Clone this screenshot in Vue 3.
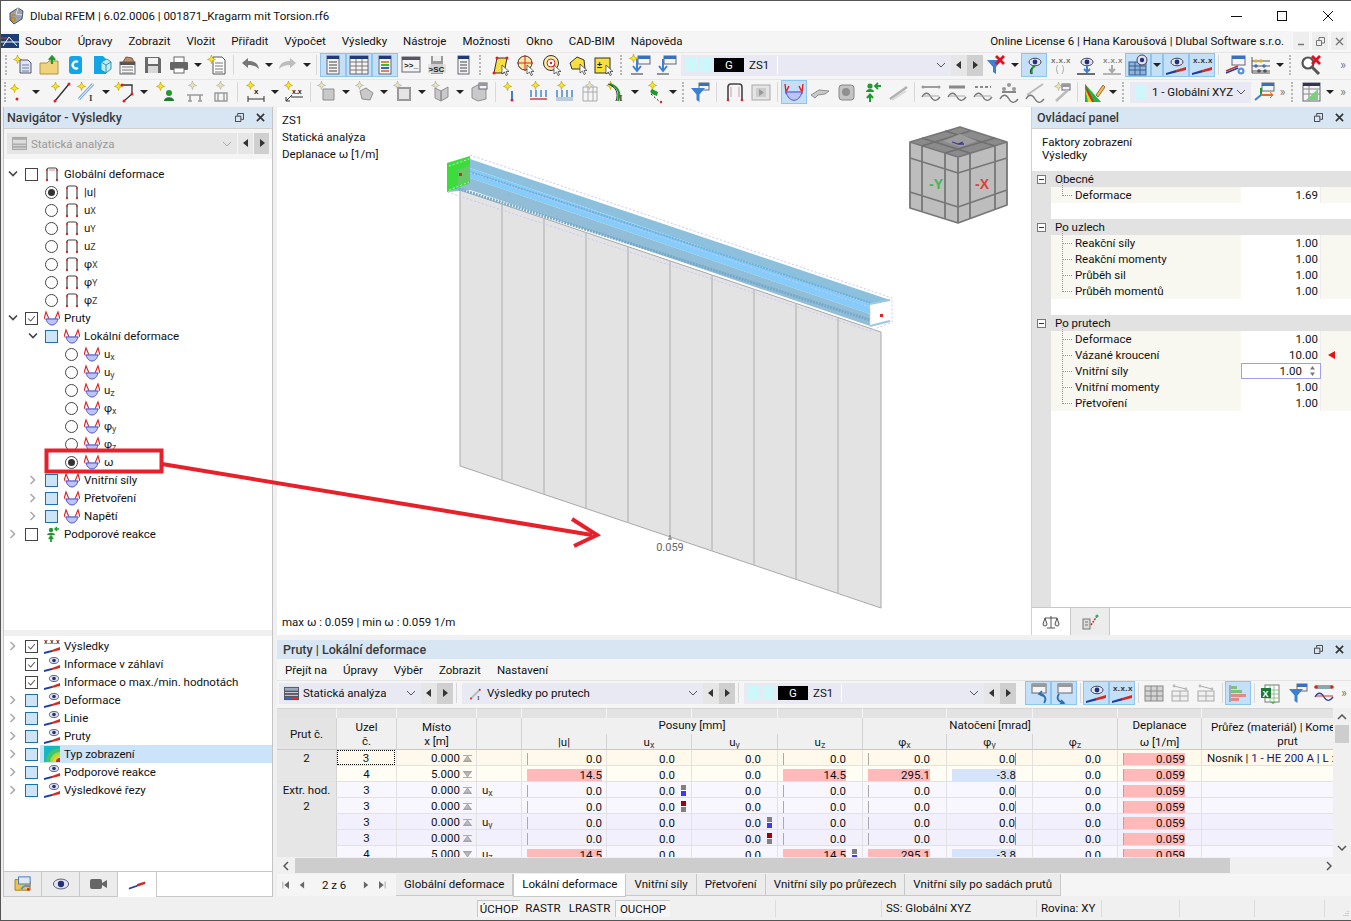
<script setup>
import { computed } from 'vue'

const starShape = (x, y, fill, line) => `<path transform="translate(${x} ${y})" d="M4.5 0l1 3 3 1.500-3 1-1 3-1-3-3-1 3-1.500z" fill="${fill}" stroke="${line}" stroke-width=".6"/>`
const star = (x = 0, y = 0) => starShape(x, y, '#ffe81a', '#b59a00')
const pale = (x = 0, y = 0) => starShape(x, y, '#eee6a8', '#aaa')
const win = (x, y, w, h, bar = '#3a6fc0') => `<rect x="${x}" y="${y}" width="${w}" height="${h}" fill="#f4f4f4" stroke="#667"/><rect x="${x}" y="${y}" width="${w}" height="3" fill="${bar}"/>`
const cursor = (x, y) => `<path transform="translate(${x} ${y})" d="M0 0v9l2.500-2 1.500 3.500 1.500-.7L4 6.500h3z" fill="#fff" stroke="#333" stroke-width=".7"/>`
const lines = (x, y, w, n, c = '#777') => Array.from({ length: n }, (_, i) => `<path d="M${x} ${y + i * 3}h${w}" stroke="${c}"/>`).join('')
const wedge = (y = 0) => `<path d="M1 ${19 + y}l10-3v2.500L1 ${21 + y}z" fill="#1f3f9f"/><path d="M11 ${16 + y}l10-3v3L11 ${18.500 + y}z" fill="#d42a20"/>`
const eye = '<ellipse cx="12" cy="8" rx="6" ry="3.800" fill="#dfe3f2" stroke="#445"/><circle cx="12" cy="8" r="2.400" fill="#24307a"/>'
const xxx = (c = '#333') => `<text x="2" y="9" font-size="8" font-weight="700" letter-spacing=".4" fill="${c}" font-family="Liberation Sans">x.x.x</text>`
const grey = (d) => `<path d="${d}" fill="#c9c9c9" stroke="#8f8f8f"/>`

const icons = {
  newm: star(1, 1) + '<path d="M8 6h8l3 3v10H8z" fill="#dfe4ef" stroke="#556"/>' + lines(10, 11, 7, 3, '#6a7fb0'),
  open: '<path d="M2 9h7l2-2h9v13H2z" fill="#f1d27d" stroke="#b8923a"/><path d="M14 10V3M11 6l3-3.500L17 6" stroke="#1f9a2f" stroke-width="2.200" fill="none"/>',
  cdoc: '<rect x="5" y="2" width="13" height="18" rx="3" fill="#12a5e8"/><path d="M14 8a3.500 3.500 0 1 0 0 6" stroke="#fff" stroke-width="2.400" fill="none"/>',
  cube: '<path d="M4 2h9l3 3v15H4z" fill="#12a5e8"/><path d="M11 8l6-3 4 3v7l-5 4-5-3z" fill="#bfeaf3" stroke="#2a9ab0"/><path d="M11 8l5 3 5-3M16 11v8" stroke="#2a9ab0" fill="none"/>',
  manage: win(4, 8, 15, 12, '#555') + lines(6, 13, 11, 3) + '<path d="M7 8l3-5 6 1 2 4z" fill="#b89070" stroke="#7a5a40"/>',
  save: '<path d="M3 3h14l2 2v14H3z" fill="#6a6a6a"/><rect x="6" y="4" width="10" height="6" fill="#f2f2f2"/><rect x="6" y="12" width="10" height="7" fill="#d8d8d8"/>',
  print: '<rect x="6" y="3" width="10" height="6" fill="#fff" stroke="#666"/><rect x="2" y="8" width="18" height="8" rx="1" fill="#666"/><rect x="6" y="14" width="10" height="5" fill="#fff" stroke="#666"/>',
  newdoc: '<path d="M7 3h9l3 3v14H7z" fill="#fff" stroke="#555"/>' + lines(9, 9, 8, 4) + star(1, 1),
  undo: '<path d="M3 9l6-5v3c6 0 10 2 11 8-3-3-6-4-11-4v3z" fill="#777"/>',
  redo: '<path d="M19 9l-6-5v3C7 7 3 9 2 15c3-3 6-4 11-4v3z" fill="#bdbdbd"/>',
  lista: win(5, 2, 12, 18, '#223a7a') + lines(7, 8, 8, 4, '#444'),
  grida: win(2, 2, 18, 18, '#223a7a') + '<path d="M2 8h18M2 12h18M2 16h18M8 5v15M14 5v15" stroke="#777"/>',
  cola: win(5, 2, 12, 18, '#223a7a') + '<path d="M7 8h8M7 11h8M7 14h8M7 17h8" stroke-width="2" stroke="#d84"/><path d="M7 11h8" stroke="#3b3" stroke-width="2"/><path d="M7 14h8" stroke="#36c" stroke-width="2"/>',
  cons: win(2, 3, 18, 15, '#556') + '<text x="4" y="14" font-size="8" font-weight="700" font-family="Liberation Mono" fill="#222">&gt;&gt;_</text>',
  sc: '<path d="M5 2h12v18H5z" fill="#9a9a9a"/><rect x="7" y="2" width="8" height="5" fill="#eee"/><rect x="2" y="10" width="18" height="9" fill="#ddd" opacity=".8"/><text x="2.500" y="18" font-size="8" font-weight="700" font-family="Liberation Sans" fill="#222">&gt;SC</text>',
  list: win(6, 2, 11, 18, '#223a7a') + lines(8, 8, 7, 4, '#444'),
  selp: '<path d="M5 19L8 4h10l-3 15z" fill="#f6df3e" stroke="#333"/><circle cx="5" cy="19" r="1.500" fill="#e02020"/><circle cx="8" cy="4" r="1.500" fill="#e02020"/><circle cx="18" cy="4" r="1.500" fill="#e02020"/>' + cursor(13, 11),
  selc: '<circle cx="10" cy="9" r="7" fill="#fbe9a0" stroke="#333"/><path d="M10 1v16M2 9h16" stroke="#e02020"/>' + cursor(12, 11),
  seld: '<circle cx="10" cy="9" r="7.500" fill="#fbe9a0" stroke="#333"/><circle cx="10" cy="9" r="4" fill="#fff" stroke="#e02020"/><circle cx="10" cy="9" r="1.200" fill="#e02020"/>' + cursor(13, 11),
  selb: '<path d="M3 9l7-6 7 3 1 9H5z" fill="#f6df3e" stroke="#333"/>' + cursor(13, 10),
  selx: '<rect x="2" y="4" width="15" height="15" fill="#f6df3e" stroke="#333"/><text x="4" y="14" font-size="9" font-weight="700" fill="#222" font-family="Liberation Sans">±</text>' + cursor(13, 11),
  wdown: win(9, 2, 12, 8) + '<path d="M8 5v12M4 12l4 5 4-5" stroke="#3d7fd0" stroke-width="2" fill="none"/><path d="M2 20h12" stroke="#333"/>' + star(0, 0),
  wdown2: win(9, 2, 12, 8) + '<path d="M8 5v12M4 12l4 5 4-5" stroke="#3d7fd0" stroke-width="2" fill="none"/><path d="M2 20h12" stroke="#333"/>',
  nstar: star(4, 3) + '<circle cx="11" cy="18" r="1.500" fill="#e02020"/>',
  line: star(1, 1) + '<path d="M5 20L19 3" stroke="#333" stroke-width="1.400"/><circle cx="5" cy="20" r="1.500" fill="#e02020"/><circle cx="19" cy="3" r="1.500" fill="#e02020"/>',
  member: star(1, 1) + '<path d="M3 18L17 3" stroke="#7fa8e0" stroke-width="3"/><path d="M3 18L17 3" stroke="#fff"/><text x="13" y="20" font-size="9" font-family="Liberation Serif" font-weight="700" fill="#444">I</text>',
  pline: star(0, 1) + '<path d="M8 4h10v9l-8 7" stroke="#333" stroke-width="1.300" fill="none"/><circle cx="8" cy="4" r="1.500" fill="#e02020"/><circle cx="18" cy="13" r="1.500" fill="#e02020"/><circle cx="10" cy="20" r="1.500" fill="#e02020"/>',
  green: star(0, 1) + '<circle cx="13" cy="12" r="3" fill="#1f9a2f"/><path d="M8 20c0-5 10-5 10 0z" fill="#1f7a2f"/>',
  gload: pale(4, 0) + '<path d="M3 14h16M6 14v6M16 14v6M4 20h4M14 20h4" stroke="#9a9a9a" stroke-width="1.600" fill="none"/>',
  gload2: pale(6, 0) + '<path d="M5 12h12v8H5zM8 12v8M14 12v8" stroke="#9a9a9a" stroke-width="1.400" fill="none"/>',
  dim: star(1, 0) + '<path d="M3 15v6M19 15v6M3 18h16" stroke="#333"/><text x="9" y="13" font-size="8" font-weight="700" fill="#222" font-family="Liberation Sans">x</text>',
  dimx: star(1, 0) + '<path d="M3 20l6-6M3 20h4M3 20v-4" stroke="#333"/><path d="M8 16h12" stroke="#333"/><text x="9" y="13" font-size="7" font-weight="700" fill="#222" font-family="Liberation Sans">x.x</text>',
  gbox: pale(1, 0) + grey('M7 8h11v11H7z'),
  grock: pale(1, 0) + grey('M6 10l6-3 7 5-3 7-8-1z'),
  gframe: pale(1, 0) + '<path d="M6 7h12v12H6z" fill="#e4e4e4" stroke="#999" stroke-width="2"/>',
  gsheet: pale(1, 0) + grey('M5 7l6 3v10l-6-3zM11 10l7-4v10l-7 4z'),
  gdoc: grey('M4 7l6-3 8 2v12l-8 2-6-3z') + win(11, 2, 8, 6, '#999'),
  rstar: star(2, 1) + '<path d="M11 10v8" stroke="#3d7fd0" stroke-width="2"/><circle cx="11" cy="19" r="1.500" fill="#e02020"/>',
  hload: star(4, 0) + '<path d="M4 9v7M9 9v7M14 9v7M19 9v7" stroke="#3d7fd0" stroke-width="1.400"/><path d="M3 18h17" stroke="#c33" stroke-width="1.400"/>',
  hload2: star(4, 0) + '<path d="M4 9v7M9 9v7M14 9v7M19 9v7" stroke="#3d7fd0" stroke-width="1.400"/><rect x="3" y="16" width="17" height="4" fill="#bcd"/>',
  hload3: '<path d="M4 6h14v14H4zM4 11h14M9 6v14M14 6v14" stroke="#aaa" fill="none"/>' + pale(6, 0),
  curve: star(1, 0) + '<path d="M5 3c8 3 11 9 8 17" stroke="#1f9a2f" stroke-width="2" fill="none"/><path d="M3 3c8 3 11 9 8 17" stroke="#333" fill="none"/><text x="14" y="20" font-size="9" font-family="Liberation Serif" font-weight="700" fill="#444">I</text>',
  gdots: star(5, 0) + '<path d="M9 8c-2 1-2 4 0 5l5 2 1-4z" fill="#1f9a2f"/><path d="M8 13l9 8" stroke="#333" stroke-dasharray="2 2"/><circle cx="18" cy="21" r="1.200" fill="#e02020"/>',
  funw: win(10, 2, 10, 7) + '<path d="M2 7h14l-5.500 6.500V21l-3-2v-5.500z" fill="#3d7fd0"/>',
  funx: '<path d="M2 6h15l-6 7v7l-3-2v-5z" fill="#3d7fd0"/><path d="M11 2l8 8M19 2l-8 8" stroke="#e01020" stroke-width="2.800"/>',
  cframe: '<path d="M4 19V6c0-2 1-3 3-3h8c2 0 3 1 3 3v13" stroke="#444" stroke-width="1.600" fill="none"/><path d="M7 6v10M15 6v10" stroke="#c9a" stroke-width="1"/><circle cx="4" cy="19" r="1.300" fill="#d22"/><circle cx="18" cy="19" r="1.300" fill="#d22"/>',
  film: '<rect x="2" y="4" width="18" height="15" fill="#e4e4e4" stroke="#aaa"/><rect x="6" y="7" width="10" height="9" fill="#ccc"/><path d="M9 8l5 3.500-5 3.500z" fill="#999"/>',
  defm: '<path d="M2 3l1 8 3-6M20 3l-1 8-3-6" stroke="#e02020" stroke-width="1.400" fill="none"/><path d="M3 11h16" stroke="#98a8d8"/><path d="M3 11c3 11 13 11 16 0z" fill="#bcc4f2" stroke="#4a50e0"/>',
  surf: grey('M2 14l8-5 10 1-4 3-7 1-3 3z'),
  dice: '<rect x="4" y="4" width="15" height="15" rx="3" fill="#c4c4c4" stroke="#888"/><circle cx="11" cy="11" r="4" fill="#8f8f8f"/>',
  supp: '<circle cx="9" cy="5" r="2.600" fill="#1f9a2f"/><path d="M5 11c0-4 8-4 8 0z" fill="#1f9a2f"/><path d="M9 21v-7M6 17l3-3.500 3 3.500" stroke="#1f9a2f" stroke-width="2" fill="none"/><path d="M20 5h-6M17 2l-3 3 3 3" stroke="#1f9a2f" stroke-width="1.800" fill="none"/>',
  stress: '<path d="M3 18L20 6" stroke="#b0b0b0" stroke-width="2.400"/><path d="M5 19l14-9" stroke="#d8d8d8" stroke-width="2"/>',
  wave: '<path d="M3 6h16" stroke="#777" stroke-width="1.400"/><circle cx="3" cy="6" r="1.500" fill="#999"/><circle cx="19" cy="6" r="1.500" fill="#999"/><path d="M2 16c3-5 6-5 9 0s6 4 9 0" stroke="#777" stroke-width="1.400" fill="none"/><path d="M3 15h16" stroke="#aaa"/>',
  wave2: '<path d="M3 6h16" stroke="#888" stroke-width="3"/><path d="M2 16c3-5 6-5 9 0s6 4 9 0" stroke="#777" stroke-width="1.400" fill="none"/><path d="M3 15h16" stroke="#aaa"/>',
  wave3: '<path d="M3 6h16" stroke="#888" stroke-width="2" stroke-dasharray="3 2"/><path d="M2 16c3-5 6-5 9 0s6 4 9 0" stroke="#777" stroke-width="1.400" fill="none"/><path d="M3 15h16" stroke="#aaa"/>',
  wave4: '<circle cx="11" cy="4" r="2" fill="#999"/><circle cx="6" cy="8" r="2" fill="#999"/><circle cx="16" cy="8" r="2" fill="#999"/><path d="M4 11h14" stroke="#888" stroke-width="2"/><path d="M2 18c3-5 6-5 9 0s6 4 9 0" stroke="#777" stroke-width="1.400" fill="none"/>',
  wave5: '<path d="M3 14L19 3" stroke="#bbb" stroke-width="2"/><path d="M2 18c3-5 6-5 9 0s6 4 9 0" stroke="#777" stroke-width="1.400" fill="none"/>',
  wave6: pale(4, 1) + win(12, 3, 8, 6, '#999') + '<path d="M6 20L18 9" stroke="#bbb" stroke-width="2.500"/>',
  color: '<path d="M2 21L2 3l16 18z" fill="#1fb53a"/><path d="M2 3l5 18h4z" fill="#e02020"/><path d="M2 8l3 13h4z" fill="#f0d020"/><path d="M13 14l7-10 2 2-7 10z" fill="#f0c040" stroke="#a64"/>',
  axes: win(9, 2, 12, 8) + '<path d="M8 14v-7" stroke="#1f9a2f" stroke-width="2"/><path d="M8 14l-6 5" stroke="#3d7fd0" stroke-width="2"/><path d="M8 14h11" stroke="#e07020" stroke-width="2"/><path d="M17 11l3 3-3 3" stroke="#e07020" fill="none"/>',
  sheet: win(3, 2, 17, 18, '#335') + '<path d="M3 8h17M3 13h17M9 5v15" stroke="#888"/><path d="M6 19L18 8v11z" fill="#7ccf7c"/>',
  eyeline: eye + '<path d="M12 12c-3 1-4 4-3 8" stroke="#1f9a2f" stroke-width="2" fill="none"/><path d="M9 14c-2 2-2 4-1 6" stroke="#333" fill="none"/>',
  xline: xxx('#777') + '<path d="M9 11c-2 2-2 5 0 9M13 11c2 2 2 5 0 9" stroke="#aaa" fill="none"/>',
  eyedown: eye + '<path d="M12 11v7M9 15l3 3 3-3" stroke="#3d7fd0" stroke-width="2" fill="none"/><path d="M2 20h18" stroke="#333" stroke-width="1.400"/>',
  xdown: xxx('#888') + '<path d="M11 11v7M8 15l3 3 3-3" stroke="#aaa" stroke-width="2" fill="none"/><path d="M2 20h18" stroke="#999" stroke-width="1.400"/>',
  gridv: '<rect x="2" y="8" width="17" height="13" fill="#8fb4dc" stroke="#3a5f90"/><path d="M2 12h17M2 16h17M8 8v13M13 8v13" stroke="#3a5f90"/><circle cx="15" cy="6" r="5" fill="#dfe3f2" stroke="#445"/><circle cx="15" cy="6" r="2.200" fill="#24307a"/>',
  eyew: eye + wedge(),
  xw: xxx() + wedge(),
  wgear: win(8, 2, 13, 9) + '<path d="M2 17L14 12" stroke="#c33" stroke-width="1.600"/><path d="M2 19L14 14" stroke="#1f3f9f" stroke-width="1.600"/><circle cx="17" cy="17" r="3.500" fill="#5f8fe0"/><circle cx="17" cy="17" r="1.300" fill="#fff"/>',
  abacus: '<path d="M2 3v16h18M2 7h18M2 12h18M2 17h18" stroke="#555" fill="none"/><circle cx="6" cy="7" r="1.800" fill="#e0b030"/><circle cx="11" cy="7" r="1.800" fill="#e0b030"/><circle cx="6" cy="12" r="1.800" fill="#3d6fc0"/><circle cx="14" cy="12" r="1.800" fill="#3d6fc0"/><circle cx="9" cy="17" r="1.800" fill="#555"/><circle cx="15" cy="17" r="1.800" fill="#555"/>',
  searchx: '<circle cx="8" cy="9" r="5.500" fill="#fff" stroke="#555" stroke-width="2.200"/><path d="M12 13l7 7" stroke="#555" stroke-width="3"/><path d="M12 2l8 8M20 2l-8 8" stroke="#e01020" stroke-width="2.800"/>',
  memb: '<path d="M3 19L17 5" stroke="#bbb" stroke-width="3"/><circle cx="3" cy="19" r="1.600" fill="#e02020"/><circle cx="17" cy="5" r="1.600" fill="#e02020"/><text x="13" y="21" font-size="9" font-family="Liberation Serif" font-weight="700" fill="#444">I</text>',
  wback: win(5, 2, 14, 9, '#999') + '<path d="M17 21c3-4 1-8-4-9" stroke="#2a6fb0" stroke-width="1.800" fill="none"/><path d="M15 9l-3 3 4 2" stroke="#2a6fb0" stroke-width="1.600" fill="none"/>',
  wnext: win(5, 2, 14, 9, '#999') + '<path d="M6 12c-3 4-1 8 5 9" stroke="#2a6fb0" stroke-width="1.800" fill="none"/><path d="M8 18l3 3-4 1" stroke="#2a6fb0" stroke-width="1.600" fill="none"/>',
  tgrid: '<rect x="2" y="4" width="18" height="15" fill="#d4d4d4" stroke="#888"/><path d="M2 9h18M2 14h18M8 4v15M14 4v15" stroke="#888"/>',
  tup: '<rect x="3" y="9" width="16" height="10" fill="#efefef" stroke="#aaa"/><path d="M3 14h16M11 9v10" stroke="#aaa"/><path d="M5 4l12 3" stroke="#aaa"/><circle cx="5" cy="4" r="1.400" fill="#bbb"/><circle cx="17" cy="7" r="1.400" fill="#bbb"/>',
  hist: '<path d="M3 3v17" stroke="#777"/><rect x="4" y="4" width="6" height="3" fill="#7fbf7f"/><rect x="4" y="8" width="11" height="3" fill="#7fbf7f"/><rect x="4" y="12" width="15" height="3" fill="#e08a8a"/><rect x="4" y="16" width="8" height="3" fill="#e08a8a"/>',
  excel: '<rect x="6" y="3" width="14" height="17" fill="#fff" stroke="#777"/><path d="M11 3v17M6 8h14M6 12h14M6 16h14M15 3v17" stroke="#8bbf8b"/><rect x="2" y="6" width="10" height="10" fill="#1e7a3c"/><text x="3.500" y="14.500" font-size="9" font-weight="700" fill="#fff" font-family="Liberation Sans">X</text><path d="M11 20l3 2 3-2" fill="#5a5"/>',
  sectline: '<path d="M3 5h16" stroke="#8aa" stroke-width="4"/><circle cx="3" cy="5" r="1.800" fill="#e02020"/><circle cx="19" cy="5" r="1.800" fill="#e02020"/><path d="M2 15c3-5 6-5 9 0s6 4 9 0" stroke="#2a3fa0" stroke-width="1.400" fill="none"/><path d="M2 14h18" stroke="#c33"/>',
  frame: '<path d="M3 15V4c0-1 .5-2 2-2h6c1.500 0 2 1 2 2v11" stroke="#444" stroke-width="1.200" fill="none"/><path d="M5 4h6" stroke="#d88"/><rect x="2" y="13" width="2" height="2" fill="#d22"/><rect x="12" y="13" width="2" height="2" fill="#d22"/><rect x="2" y="3" width="2" height="2" fill="#c44"/><rect x="12" y="3" width="2" height="2" fill="#c44"/>',
  frameg: '<path d="M3 15V4c0-1 .5-2 2-2h6c1.500 0 2 1 2 2v11" stroke="#444" stroke-width="1.200" fill="none"/><rect x="2" y="13" width="2" height="2" fill="#d22"/><rect x="12" y="13" width="2" height="2" fill="#d22"/><rect x="2" y="3" width="2" height="2" fill="#c44"/><rect x="12" y="3" width="2" height="2" fill="#c44"/>',
  bowl: '<path d="M0 9l2-7 3 7M16 9l-2-7-3 7" stroke="#e02020" stroke-width="1.100" fill="none"/><path d="M1 9h14" stroke="#98a8d8"/><path d="M2 9c2 8 10 8 12 0z" fill="#bcc4f2" stroke="#4a50e0"/>',
  tsup: '<circle cx="7" cy="4" r="2.200" fill="#1f9a2f"/><path d="M3 9c0-3 8-3 8 0z" fill="#1f9a2f"/><path d="M7 16v-6M5 13l2-3 2 3" stroke="#1f9a2f" stroke-width="1.800" fill="none"/><path d="M15 3h-4M13 1l-2 2 2 2" stroke="#1f9a2f" stroke-width="1.400" fill="none"/>',
  txxx: '<text x="0" y="6" font-size="6.500" font-weight="700" letter-spacing=".3" fill="#333" font-family="Liberation Sans">x.x.x</text><path d="M0 14l8-2v2l-8 2z" fill="#1f3f9f"/><path d="M8 12l8-3v3l-8 2z" fill="#d42a20"/>',
  teye: '<ellipse cx="10" cy="4.500" rx="4.600" ry="3" fill="#dfe3f2" stroke="#445" stroke-width=".8"/><circle cx="10" cy="4.500" r="1.800" fill="#24307a"/><path d="M0 14l8-2v2l-8 2z" fill="#1f3f9f"/><path d="M8 12l8-3v3l-8 2z" fill="#d42a20"/>',
  trainbow: '<rect width="16" height="16" fill="#16b8c8"/><circle cx="16" cy="16" r="14" fill="#3fc76a"/><circle cx="16" cy="16" r="10" fill="#a8d840"/><circle cx="16" cy="16" r="7" fill="#f0d030"/><circle cx="16" cy="16" r="4" fill="#c03030"/>'
}

// toolbar specs: name, name:a (pressed), v dropdown, | separator, ^ grip, sN spacer, >> overflow
const parseBar = (s) => s.trim().split(/\s+/).map((t) => {
  if (t === 'v' || t === 'v:a') return { k: 'dd', a: t === 'v:a' }
  if (t === '|') return { k: 'sep' }
  if (t === '^') return { k: 'grip' }
  if (t === '>>') return { k: 'more' }
  if (/^s\d+$/.test(t)) return { k: 'sp', w: +t.slice(1) }
  if (t.startsWith('#')) return { k: 'slot', name: t.slice(1) }
  const [name, flag] = t.split(':')
  return { k: 'ic', name, a: flag === 'a' }
})

const bar1 = parseBar('s1 ^ newm open cdoc cube manage save print v newdoc | undo v redo v | lista:a grida:a cola:a cons sc list ^ s3 selp selc seld selb selx ^ s2 wdown wdown2 s1 #ld funx v eyeline:a xline eyedown xdown gridv:a v:a eyew:a xw:a | wgear abacus v ^ s4 searchx s12 >>')
const bar2 = parseBar('^ nstar v s6 line member v pline v s4 green s2 gload gload2 | s2 dim v dimx | gbox v grock v gframe v gsheet v gdoc | rstar hload hload2 hload3 curve v gdots v ^ funw | s2 cframe film | defm:a surf dice supp stress | wave wave2 wave3 wave4 wave5 wave6 | color v ^ s3 #cs axes >> ^ s2 sheet v >>')
const bar3 = parseBar('s9 wback:a wnext:a | eyew:a xw:a | tgrid tup tup | hist:a | excel s2 funw sectline >>')

const menu = ['Soubor', 'Úpravy', 'Zobrazit', 'Vložit', 'Přiřadit', 'Výpočet', 'Výsledky', 'Nástroje', 'Možnosti', 'Okno', 'CAD-BIM', 'Nápověda']

const sub = (l, s) => ({ label: l, sb: s })
const globalRows = [['|u|', '', 1], ['u', 'X'], ['u', 'Y'], ['u', 'Z'], ['φ', 'X'], ['φ', 'Y'], ['φ', 'Z']]
const localRows = [['u', 'x'], ['u', 'y'], ['u', 'z'], ['φ', 'x'], ['φ', 'y'], ['φ', 'z'], ['ω', '', 1]]
const treeTop = [
  { depth: 0, chev: 'd', box: 'empty', icon: 'frame', label: 'Globální deformace' },
  ...globalRows.map(([l, s, on]) => ({ depth: 1, box: on ? 'radioOn' : 'radio', icon: 'frameg', ...sub(l, s) })),
  { depth: 0, chev: 'd', box: 'check', icon: 'bowl', label: 'Pruty' },
  { depth: 1, chev: 'd', box: 'blue', icon: 'bowl', label: 'Lokální deformace' },
  ...localRows.map(([l, s, on]) => ({ depth: 2, box: on ? 'radioOn' : 'radio', icon: 'bowl', ...sub(l, s), low: true })),
  { depth: 1, chev: 'r', box: 'blue', icon: 'bowl', label: 'Vnitřní síly' },
  { depth: 1, chev: 'r', box: 'blue', icon: 'bowl', label: 'Přetvoření' },
  { depth: 1, chev: 'r', box: 'blue', icon: 'bowl', label: 'Napětí' },
  { depth: 0, chev: 'r', box: 'empty', icon: 'tsup', label: 'Podporové reakce' }
]
const treeBottom = [
  { chev: 'r', box: 'check', icon: 'txxx', label: 'Výsledky' },
  { box: 'check', icon: 'teye', label: 'Informace v záhlaví' },
  { box: 'check', icon: 'teye', label: 'Informace o max./min. hodnotách' },
  { chev: 'r', box: 'blue', icon: 'teye', label: 'Deformace' },
  { chev: 'r', box: 'blue', icon: 'teye', label: 'Linie' },
  { chev: 'r', box: 'blue', icon: 'teye', label: 'Pruty' },
  { chev: 'r', box: 'blue', icon: 'trainbow', label: 'Typ zobrazení', hl: true },
  { chev: 'r', box: 'blue', icon: 'teye', label: 'Podporové reakce' },
  { chev: 'r', box: 'blue', icon: 'teye', label: 'Výsledkové řezy' }
]

const groups = [
  { title: 'Obecné', rows: [['Deformace', '1.69']] },
  { title: 'Po uzlech', rows: [['Reakční síly', '1.00'], ['Reakční momenty', '1.00'], ['Průběh sil', '1.00'], ['Průběh momentů', '1.00']] },
  { title: 'Po prutech', rows: [['Deformace', '1.00'], ['Vázané kroucení', '10.00', 'flag'], ['Vnitřní síly', '1.00', 'edit'], ['Vnitřní momenty', '1.00'], ['Přetvoření', '1.00']] }
]

const zero = ['0.0', '0.0', '0.0', '0.0', '0.0', '0.0', '0.0', '0.059']
const peak = ['14.5', '0.0', '0.0', '14.5', '295.1', '-3.8', '0.0', '0.059']
const rows = [
  { cls: 'r1', head: '2', node: '3', x: '0.000', vals: zero, focus: true, up: true },
  { cls: 'r2', head: '', node: '4', x: '5.000', vals: peak },
  { cls: 'r3', head: 'Extr. hod.', node: '3', x: '0.000', lab: 'x', vals: zero, mark: [1, 'lo'], up: true },
  { cls: 'r3', head: '2', node: '3', x: '0.000', vals: zero, mark: [1, 'hi'], up: true },
  { cls: 'r4', head: '', node: '3', x: '0.000', lab: 'y', vals: zero, mark: [2, 'lo'], up: true },
  { cls: 'r4', head: '', node: '3', x: '0.000', vals: zero, mark: [2, 'hi'], up: true },
  { cls: 'r3', head: '', node: '4', x: '5.000', lab: 'z', vals: peak, mark: [3, 'lo'] }
]
const colClass = ['c-u', 'c-x', 'c-y', 'c-z', 'c-fx', 'c-fy', 'c-fz', 'c-w']
const barClass = (v, c) => {
  if (v === '-3.8') return 'blue'
  if (c === 7) return 'pink tick'
  if (v !== '0.0') return 'pink'
  if (c === 0 || c === 3 || c === 4) return 'tick'
  if (c === 5) return 'tickr'
  return ''
}
const cols = [60, 60, 80, 45, 85, 85, 86, 85, 84, 86, 85, 84, 172]
const tableWidth = computed(() => cols.reduce((a, b) => a + b, 0))

const sheets = ['Globální deformace', 'Lokální deformace', 'Vnitřní síly', 'Přetvoření', 'Vnitřní síly po průřezech', 'Vnitřní síly po sadách prutů']
const walls = [460, 502, 544, 586, 628, 670, 712, 754, 796, 838, 881]
</script>

<template>
  <div class="window">
    <header class="titlebar">
      <svg class="appicon" viewBox="0 0 18 18">
        <path d="M3 6l8-5 5 3-1 8-8 5-4-4z" fill="#9aa2ae" stroke="#4a5462" />
        <path d="M11 1l-2 6 6 1" stroke="#dfe4ea" fill="none" />
        <text x="4" y="15" font-size="10" font-weight="700" fill="#c08a20" font-family="Liberation Sans">6</text>
      </svg>
      <span class="titletext">Dlubal RFEM | 6.02.0006 | 001871_Kragarm mit Torsion.rf6</span>
      <div class="winbtns">
        <svg viewBox="0 0 46 30"><path d="M18 15.500h11" stroke="#111" /></svg>
        <svg viewBox="0 0 46 30"><rect x="18.500" y="10.500" width="9" height="9" fill="none" stroke="#111" /></svg>
        <svg viewBox="0 0 46 30"><path d="M18 10l10 10M28 10L18 20" stroke="#111" /></svg>
      </div>
    </header>

    <nav class="menubar">
      <svg class="mdi" viewBox="0 0 18 14">
        <rect width="18" height="14" fill="#1d3f78" />
        <path d="M0 8h18M2 12L8 3l8 9" stroke="#fff" fill="none" />
        <path d="M0 4h6" stroke="#d33" />
      </svg>
      <span v-for="m in menu" :key="m" class="mitem">{{ m }}</span>
      <span class="license">Online License 6 | Hana Karoušová | Dlubal Software s.r.o.</span>
      <div class="mdibtns">
        <span class="mdibtn"><svg viewBox="0 0 9 9"><path d="M1 7.500h6" stroke="#777" stroke-width="1.500" /></svg></span>
        <span class="mdibtn"><svg viewBox="0 0 9 9"><path d="M.5 3.500h5v5h-5zM3 3V.5h5.500V6H6" stroke="#777" fill="none" /></svg></span>
        <span class="mdibtn"><svg viewBox="0 0 9 9"><path d="M1 1l7 7M8 1L1 8" stroke="#777" stroke-width="1.400" /></svg></span>
      </div>
    </nav>

    <div class="toolbar tb1">
      <template v-for="(it, i) in bar1" :key="i">
        <svg v-if="it.k === 'ic'" class="ic" :class="{ on: it.a }" viewBox="-2 -1 26 24" v-html="icons[it.name]" />
        <span v-else-if="it.k === 'dd'" class="dd" :class="{ on: it.a }" />
        <span v-else-if="it.k === 'sep'" class="sep" />
        <span v-else-if="it.k === 'grip'" class="grip" />
        <span v-else-if="it.k === 'more'" class="more">»</span>
        <span v-else-if="it.k === 'sp'" :style="{ width: it.w + 'px' }" />
        <div v-else class="ldrow">
          <div class="combo ld">
            <span class="sw" /><span class="sw" /><span class="black">G</span><span class="ctext">ZS1</span><span class="csep" />
            <svg class="chev" viewBox="0 0 10 6"><path d="M1 1l4 4 4-4" stroke="#555" fill="none" /></svg>
          </div>
          <div class="navpair"><span class="nl" /><span class="nr" /></div>
        </div>
      </template>
    </div>
    <div class="toolbar tb2">
      <template v-for="(it, i) in bar2" :key="i">
        <svg v-if="it.k === 'ic'" class="ic" :class="{ on: it.a }" viewBox="-2 -1 26 24" v-html="icons[it.name]" />
        <span v-else-if="it.k === 'dd'" class="dd" />
        <span v-else-if="it.k === 'sep'" class="sep" />
        <span v-else-if="it.k === 'grip'" class="grip" />
        <span v-else-if="it.k === 'more'" class="more">»</span>
        <span v-else-if="it.k === 'sp'" :style="{ width: it.w + 'px' }" />
        <div v-else class="combo cs">
          <span class="sw" /><span class="ctext">1 - Globální XYZ</span>
          <svg class="chev" viewBox="0 0 10 6"><path d="M1 1l4 4 4-4" stroke="#555" fill="none" /></svg>
        </div>
      </template>
    </div>

    <main class="main">
      <aside class="nav">
        <div class="phead"><b>Navigátor - Výsledky</b><span class="pbtns">
          <svg viewBox="0 0 10 10"><path d="M.5 3.500h6v6h-6zM3 3V.5h6.500V7H7" stroke="#333" fill="none" /></svg>
          <svg viewBox="0 0 10 10"><path d="M1 1l8 8M9 1L1 9" stroke="#333" stroke-width="1.800" /></svg>
        </span></div>
        <div class="navcombo">
          <div class="combo dis">
            <svg class="cicon" viewBox="0 0 16 14"><rect width="16" height="14" fill="#aaa" /><rect x="1" y="3" width="14" height="4" fill="#ddd" /><path d="M1 9h14M1 12h14" stroke="#ddd" /></svg>
            <span class="ctext">Statická analýza</span>
            <svg class="chev" viewBox="0 0 10 6"><path d="M1 1l4 4 4-4" stroke="#aaa" fill="none" /></svg>
          </div>
          <div class="navpair big"><span class="nl" /><span class="nr" /></div>
        </div>
        <div class="tree top">
          <div v-for="(r, i) in treeTop" :key="i" class="trow" :style="{ paddingLeft: 1 + r.depth * 20 + 'px' }">
            <span class="chevslot">
              <svg v-if="r.chev === 'd'" viewBox="0 0 10 7"><path d="M1 1l4 4 4-4" stroke="#444" stroke-width="1.600" fill="none" /></svg>
              <svg v-else-if="r.chev === 'r'" viewBox="0 0 7 10"><path d="M1 1l4 4-4 4" stroke="#aaa" stroke-width="1.600" fill="none" /></svg>
            </span>
            <span v-if="r.box.startsWith('radio')" class="radio" :class="{ on: r.box === 'radioOn' }" />
            <span v-else class="box" :class="r.box">
              <svg v-if="r.box === 'check'" viewBox="0 0 13 13"><path d="M2.500 6.500l3 3 5-6" stroke="#555" stroke-width="1.200" fill="none" /></svg>
            </span>
            <svg class="tic" viewBox="0 0 16 16" v-html="icons[r.icon]" />
            <span class="tlabel">{{ r.label }}<span v-if="r.sb" class="sb" :class="{ low: r.low }">{{ r.sb }}</span></span>
          </div>
        </div>
        <div class="navstrip" />
        <div class="tree bottom">
          <div v-for="(r, i) in treeBottom" :key="i" class="trow flat">
            <span class="chevslot">
              <svg v-if="r.chev === 'r'" viewBox="0 0 7 10"><path d="M1 1l4 4-4 4" stroke="#aaa" stroke-width="1.600" fill="none" /></svg>
            </span>
            <span class="box" :class="r.box">
              <svg v-if="r.box === 'check'" viewBox="0 0 13 13"><path d="M2.500 6.500l3 3 5-6" stroke="#555" stroke-width="1.200" fill="none" /></svg>
            </span>
            <span class="tfill" :class="{ hl: r.hl }">
              <svg class="tic" viewBox="0 0 16 16" v-html="icons[r.icon]" />
              <span class="tlabel">{{ r.label }}</span>
            </span>
          </div>
        </div>
        <div class="navtabs">
          <span class="ntab"><svg viewBox="0 0 20 18"><path d="M1 4h7l1 2h9v10H1z" fill="#efc24a" stroke="#a37b22" /><rect x="5" y="1" width="13" height="8" fill="#dfe8f5" stroke="#3a6fc0" /><path d="M8 15c2-4 6-5 10-3" stroke="#4a8fd0" stroke-width="2" fill="none" /><circle cx="16" cy="15" r="1.500" fill="#d22" /></svg></span>
          <span class="ntab"><svg viewBox="0 0 20 14"><ellipse cx="10" cy="7" rx="8.500" ry="5.500" fill="#dfe3f2" stroke="#556" /><circle cx="10" cy="7" r="3.500" fill="#24307a" /></svg></span>
          <span class="ntab"><svg viewBox="0 0 18 12"><rect y="1" width="12" height="10" rx="2" fill="#666" /><path d="M12 5l5-3v8l-5-3z" fill="#666" /></svg></span>
          <span class="ntab active"><svg viewBox="0 0 20 10"><path d="M1 8l9-3v2l-9 3z" fill="#1f3f9f" /><path d="M10 4l9-3v3l-9 3z" fill="#d42a20" /></svg></span>
        </div>
      </aside>

      <div class="work">
        <div class="upper">
          <section class="viewport">
            <svg class="model" viewBox="277 107 753 528">
              <polygon :points="'460,190 881,332 881,608 460,466'" fill="#e3e3e3" stroke="#a8a8a8" />
              <path v-for="x in walls.slice(1, -1)" :key="x" :d="`M${x} ${190 + (x - 460) * 0.337}V${466 + (x - 460) * 0.337}`" stroke="#bcbcbc" stroke-width="1.400" />
              <polygon points="470,159 890,300 870,304 470,168" fill="#8cc0dc" />
              <polygon points="470,168 870,304 870,314 470,178" fill="#86ccfa" />
              <polygon points="470,178 870,314 890,321 870,326 470,190 448,192" fill="#92bdd6" />
              <path d="M458 168L880 306" stroke="#6fb0d8" stroke-width="2" stroke-dasharray="2 1" />
              <path d="M450 186L870 320" stroke="#74a9cc" stroke-width="3" stroke-dasharray="2 1" />
              <polygon points="870,304 890,300 890,321 870,326" fill="#fff" />
              <path d="M870 304l20-4M870 326l20-5" stroke="#9cc8e4" stroke-width="2" />
              <path d="M470 155L892 298V322L870 331L447 192M447 165L870 307V331" fill="none" stroke="#c8c8fa" stroke-dasharray="2 2" />
              <polygon points="447,163 470,156 470,183 447,192" fill="#3ddc3d" />
              <polygon points="458,170 470,165 470,180 458,186" fill="#66c866" />
              <path d="M449 166l20-7M449 190l20-8" stroke="#d0f0d0" stroke-dasharray="2 2" />
              <rect x="459" y="173" width="3" height="3" fill="#e82020" />
              <rect x="880" y="314" width="3" height="3" fill="#e82020" />
              <path d="M670 535v4M668 539h4" stroke="#666" />
              <text x="670" y="551" class="vlabel" text-anchor="middle">0.059</text>

              <polygon points="960,127 1007,142 958,157 910,142" fill="#8b8b8b" />
              <polygon points="910,142 958,157 958,223 910,208" fill="#bdbdbd" />
              <polygon points="958,157 1007,142 1007,205 958,223" fill="#bdbdbd" />
              <g stroke="#777" stroke-width="1.800" fill="none" stroke-linejoin="round">
                <path d="M910 142L960 127L1007 142L958 157ZM910 142V208L958 223L1007 205V142M958 157V223" />
                <path d="M910 158L958 173L1007 158M910 192L958 207L1007 190" />
                <path d="M922 146V212M945 153V219M970 153V219M995 146V209" />
                <path d="M922 138L970 153M945 131L995 146M995 138L945 153M970 131L922 146" stroke="#6f6f6f" />
              </g>
              <polygon points="960,134 977,141 960,147 943,141" fill="#9c9c9c" />
              <text x="936" y="189" class="cube y" text-anchor="middle">-Y</text>
              <text x="982" y="189" class="cube x" text-anchor="middle">-X</text>
              <path d="M952 142l6 2 5-2M958 144l6 0" stroke="#3a3a90" stroke-width="1.300" fill="none" />
            </svg>
            <div class="vhead">
              <div>ZS1</div>
              <div>Statická analýza</div>
              <div>Deplanace ω [1/m]</div>
            </div>
            <div class="vfoot">max ω : 0.059 | min ω : 0.059 1/m</div>
          </section>

          <aside class="control">
            <div class="phead"><b>Ovládací panel</b><span class="pbtns">
              <svg viewBox="0 0 10 10"><path d="M.5 3.500h6v6h-6zM3 3V.5h6.500V7H7" stroke="#333" fill="none" /></svg>
              <svg viewBox="0 0 10 10"><path d="M1 1l8 8M9 1L1 9" stroke="#333" stroke-width="1.800" /></svg>
            </span></div>
            <div class="cpinfo">
              <div>Faktory zobrazení</div>
              <div>Výsledky</div>
            </div>
            <div class="cpbody">
              <div v-for="g in groups" :key="g.title" class="cpgroup">
                <div class="cphead"><span class="minus" /><span class="gtitle">{{ g.title }}</span></div>
                <div v-for="r in g.rows" :key="r[0]" class="cprow">
                  <span class="cplabel">{{ r[0] }}</span>
                  <span class="cpval" :class="{ edit: r[2] === 'edit' }">{{ r[1] }}
                    <svg v-if="r[2] === 'edit'" class="spin" viewBox="0 0 7 10"><path d="M3.500 0L6 3.500H1zM3.500 10L1 6.500h5z" fill="#777" /></svg>
                  </span>
                  <span class="cpextra"><i v-if="r[2] === 'flag'" class="flag" /></span>
                </div>
              </div>
            </div>
            <div class="cptabs">
              <span class="ctab active"><svg viewBox="0 0 18 16"><path d="M9 2v12M5 14h8M3 4h12" stroke="#555" fill="none" /><path d="M1 10l2-6 2 6a2 2 0 0 1-4 0zM13 10l2-6 2 6a2 2 0 0 1-4 0z" fill="#eee" stroke="#555" /></svg></span>
              <span class="ctab"><svg viewBox="0 0 18 16"><rect x="2" y="5" width="7" height="10" fill="#ddd" stroke="#777" /><path d="M4 8h3M4 11h3" stroke="#777" /><path d="M10 11L16 2" stroke="#e02020" stroke-width="1.400" stroke-dasharray="2 1" /><circle cx="16" cy="2" r="1.500" fill="#3a7" /></svg></span>
            </div>
          </aside>
        </div>

        <section class="results">
          <div class="phead rhead"><b>Pruty | Lokální deformace</b><span class="pbtns">
            <svg viewBox="0 0 10 10"><path d="M.5 3.500h6v6h-6zM3 3V.5h6.500V7H7" stroke="#333" fill="none" /></svg>
            <svg viewBox="0 0 10 10"><path d="M1 1l8 8M9 1L1 9" stroke="#333" stroke-width="1.800" /></svg>
          </span></div>
          <div class="rmenu"><span>Přejít na</span><span>Úpravy</span><span>Výběr</span><span>Zobrazit</span><span>Nastavení</span></div>
          <div class="rtools">
            <div class="combo c1">
              <svg class="cicon" viewBox="0 0 16 14"><rect width="16" height="14" fill="#556" /><rect x="1" y="1" width="14" height="3" fill="#9ab" /><path d="M1 6h14M1 9h14" stroke="#ddd" /><path d="M1 12h7" stroke="#36c" stroke-width="2" /><path d="M8 12h7" stroke="#d33" stroke-width="2" /></svg>
              <span class="ctext">Statická analýza</span>
              <svg class="chev" viewBox="0 0 10 6"><path d="M1 1l4 4 4-4" stroke="#555" fill="none" /></svg>
            </div>
            <div class="navpair"><span class="nl" /><span class="nr" /></div>
            <span class="sep wide" />
            <div class="combo c2">
              <svg class="cicon" viewBox="-1 -1 24 24" v-html="icons.memb" />
              <span class="ctext">Výsledky po prutech</span>
              <svg class="chev" viewBox="0 0 10 6"><path d="M1 1l4 4 4-4" stroke="#555" fill="none" /></svg>
            </div>
            <div class="navpair"><span class="nl" /><span class="nr" /></div>
            <span class="sep wide" />
            <div class="combo c3">
              <span class="sw" /><span class="sw" /><span class="black">G</span><span class="ctext">ZS1</span><span class="csep" />
              <svg class="chev" viewBox="0 0 10 6"><path d="M1 1l4 4 4-4" stroke="#555" fill="none" /></svg>
            </div>
            <div class="navpair"><span class="nl" /><span class="nr" /></div>
            <template v-for="(it, i) in bar3" :key="i">
              <svg v-if="it.k === 'ic'" class="ic" :class="{ on: it.a }" viewBox="-2 -1 26 24" v-html="icons[it.name]" />
              <span v-else-if="it.k === 'sep'" class="sep" />
              <span v-else-if="it.k === 'more'" class="more">»</span>
              <span v-else-if="it.k === 'sp'" :style="{ width: it.w + 'px' }" />
            </template>
          </div>
          <div class="tablewrap">
            <div class="tableclip">
              <table class="grid" :style="{ width: tableWidth + 'px' }">
                <colgroup><col v-for="(c, i) in cols" :key="i" :style="{ width: c + 'px' }" /></colgroup>
                <thead>
                  <tr class="strip"><th v-for="(c, i) in cols" :key="i" /></tr>
                  <tr class="h1">
                    <th rowspan="2" class="hfirst">Prut č.</th>
                    <th rowspan="2">Uzel<br />č.</th>
                    <th rowspan="2">Místo<br />x [m]</th>
                    <th rowspan="2" />
                    <th colspan="4">Posuny [mm]</th>
                    <th colspan="3">Natočení [mrad]</th>
                    <th>Deplanace</th>
                    <th rowspan="2" class="hnote">Průřez (materiál) | Komentář k<br />prut</th>
                  </tr>
                  <tr class="h2">
                    <th>|u|</th>
                    <th>u<span class="sb low">x</span></th>
                    <th>u<span class="sb low">y</span></th>
                    <th>u<span class="sb low">z</span></th>
                    <th>φ<span class="sb low">x</span></th>
                    <th>φ<span class="sb low">y</span></th>
                    <th>φ<span class="sb low">z</span></th>
                    <th>ω [1/m]</th>
                  </tr>
                </thead>
                <tbody>
                  <tr v-for="(r, i) in rows" :key="i" :class="r.cls">
                    <td class="first" :class="{ nob: i === 0 || (i > 1 && i < 6) }">{{ r.head }}</td>
                    <td class="ctr"><span v-if="r.focus" class="focus">{{ r.node }}</span><template v-else>{{ r.node }}</template></td>
                    <td class="place">{{ r.x }}
                      <svg class="pin" viewBox="0 0 9 7">
                        <path v-if="r.up" d="M0 .5h9M4.500 1L8 6H1zM0 6.500h9" stroke="#999" fill="#bbb" stroke-width=".8" />
                        <path v-else d="M0 .5h9M4.500 6L8 1H1zM0 6.500h9" stroke="#999" fill="#bbb" stroke-width=".8" />
                      </svg>
                    </td>
                    <td class="lab"><template v-if="r.lab">u<span class="sb low">{{ r.lab }}</span></template></td>
                    <td v-for="(v, c) in r.vals" :key="c" class="num" :class="colClass[c]">
                      <span class="val" :class="barClass(v, c)">{{ v }}</span>
                      <i v-if="r.mark && r.mark[0] === c" class="mark" :class="r.mark[1]" />
                    </td>
                    <td class="note"><template v-if="i === 0">Nosník | <em>1 - HE 200 A</em> | L : 5.000 m</template></td>
                  </tr>
                </tbody>
              </table>
            </div>
            <div class="vscroll">
              <svg viewBox="0 0 10 6"><path d="M1 5l4-4 4 4" stroke="#555" stroke-width="1.500" fill="none" /></svg>
              <span class="vthumb" />
              <svg class="vdown" viewBox="0 0 10 6"><path d="M1 1l4 4 4-4" stroke="#555" stroke-width="1.500" fill="none" /></svg>
            </div>
          </div>
          <div class="hscroll">
            <svg viewBox="0 0 6 10"><path d="M5 1L1 5l4 4" stroke="#555" stroke-width="1.500" fill="none" /></svg>
            <span class="hthumb" />
            <svg viewBox="0 0 6 10"><path d="M1 1l4 4-4 4" stroke="#555" stroke-width="1.500" fill="none" /></svg>
          </div>
          <div class="sheets">
            <div class="pager">
              <svg viewBox="0 0 8 8"><path d="M1 0v8M8 0L3 4l5 4z" fill="#666" stroke="#666" stroke-width=".6" /></svg>
              <svg viewBox="0 0 8 8"><path d="M7 0L2 4l5 4z" fill="#666" /></svg>
              <span>2 z 6</span>
              <svg viewBox="0 0 8 8"><path d="M1 0l5 4-5 4z" fill="#666" /></svg>
              <svg viewBox="0 0 8 8"><path d="M7 0v8M0 0l5 4-5 4z" fill="#666" stroke="#666" stroke-width=".6" /></svg>
            </div>
            <span v-for="(s, i) in sheets" :key="s" class="sheet" :class="{ active: i === 1 }">{{ s }}</span>
          </div>
        </section>
      </div>
    </main>

    <footer class="status">
      <span class="st pressed w43">ÚCHOP</span>
      <span class="st w42">RASTR</span>
      <span class="st w47">LRASTR</span>
      <span class="st pressed w55">OUCHOP</span>
      <span class="scell w1" />
      <span class="scell w2" />
      <span class="scell w3">SS: Globální XYZ</span>
      <span class="scell w4">Rovina: XY</span>
      <span class="scell w5" />
      <span class="scell w6" />
      <span class="scell w7" />
      <svg class="sgrip" viewBox="0 0 8 8"><path d="M7 1v1M5 3v1M7 3v1M3 5v1M5 5v1M7 5v1" stroke="#aaa" /></svg>
    </footer>

    <svg class="annot" viewBox="0 0 1351 921">
      <rect x="46.500" y="450.500" width="115" height="21" fill="none" stroke="#e8202a" stroke-width="4" />
      <path d="M162 464L592 535" stroke="#e8202a" stroke-width="4" fill="none" />
      <path d="M572 519L597 535L574 546" stroke="#e8202a" stroke-width="4" fill="none" />
    </svg>
  </div>
</template>

<style>
html, body { margin: 0; padding: 0; overflow: hidden; }
</style>

<style scoped>
.window {
  position: relative;
  width: 1351px;
  height: 921px;
  box-sizing: border-box;
  border: 1px solid #555;
  border-width: 1px 0 1px 1px;
  background: #f0f0f0;
  display: flex;
  flex-direction: column;
  overflow: hidden;
  font-family: Roboto, "Noto Sans", sans-serif;
  font-size: 11.500px;
  color: #111;
}
.titlebar {
  height: 30px;
  background: #fff;
  display: flex;
  align-items: center;
  flex: none;
}
.appicon { width: 18px; height: 18px; margin-left: 6px; }
.titletext { margin-left: 5px; }
.winbtns { margin-left: auto; display: flex; }
.winbtns svg { width: 46px; height: 30px; }

.menubar {
  height: 21px;
  box-sizing: border-box;
  padding-bottom: 1px;
  background: #f5f5f5;
  display: flex;
  align-items: center;
  flex: none;
}
.mdi { width: 18px; height: 14px; margin-right: -2px; }
.mitem { padding: 0 8px; }
.license { margin-left: auto; margin-right: 8px; }
.mdibtns { display: flex; gap: 1px; margin-right: 3px; }
.mdibtn { width: 16px; height: 18px; background: #eee; border: 1px solid #f9f9f9; display: flex; align-items: center; justify-content: center; }
.mdibtn svg { width: 9px; height: 9px; }

.toolbar {
  height: 27px;
  box-sizing: border-box;
  padding-bottom: 2px;
  background: #f5f5f5;
  border-top: 1px solid #e6e6e6;
  display: flex;
  align-items: center;
  flex: none;
}
.ic { width: 26px; height: 24px; flex: none; box-sizing: border-box; }
.ic.on { background: #c4dff8; outline: 1px solid #8ec4f0; outline-offset: -1px; }
.dd { width: 12px; height: 24px; flex: none; position: relative; }
.dd::after {
  content: "";
  position: absolute;
  left: 2px;
  top: 10px;
  border: 4px solid transparent;
  border-top: 4px solid #222;
}
.dd.on { background: #c4dff8; outline: 1px solid #8ec4f0; outline-offset: -1px; }
.sep { width: 7px; height: 22px; flex: none; position: relative; }
.sep::after { content: ""; position: absolute; left: 3px; top: 1px; bottom: 1px; border-left: 1px solid #d8d8d8; }
.grip { width: 7px; height: 22px; flex: none; margin-left: 1px; position: relative; }
.grip::after { content: ""; position: absolute; left: 2px; top: 1px; bottom: 1px; border-left: 2px dotted #b8b8b8; }
.tb2 .grip:first-child { margin-right: -5px; }
.more { width: 14px; flex: none; text-align: center; color: #777; font-size: 12px; }
.tb2 .more:not(:last-child) { width: 11px; }

.combo {
  display: flex;
  align-items: center;
  height: 21px;
  background: #e8e9f3;
  flex: none;
  box-sizing: border-box;
  padding-left: 5px;
}
.combo .chev { width: 10px; height: 6px; margin-left: auto; margin-right: 5px; flex: none; }
.ctext { margin-left: 5px; white-space: nowrap; }
.sw { width: 11px; height: 14px; background: #ccf7fb; margin-right: 3px; flex: none; }
.black { width: 30px; height: 14px; background: #000; color: #fff; text-align: center; line-height: 14px; flex: none; }
.csep { border-left: 1px solid #fff; height: 18px; margin-left: 8px; }
.ldrow { display: flex; flex: none; margin-left: 1px; }
.combo.ld { width: 270px; }
.combo.cs { width: 121px; }
.combo.cs .ctext { margin-left: 3px; }
.navpair { display: flex; flex: none; height: 21px; width: 32px; }
.navpair span { flex: 1; position: relative; background: #e6e6e6; }
.navpair .nr { background: #cfcfcf; }
.navpair .nl::after, .navpair .nr::after { content: ""; position: absolute; top: 6px; border: 4px solid transparent; }
.navpair .nl::after { left: 5px; border-right: 5px solid #333; border-left: 0; }
.navpair .nr::after { left: 6px; border-left: 5px solid #333; border-right: 0; }

.main { flex: 1; display: flex; min-height: 0; margin-top: 1px; }
.nav {
  width: 268px;
  margin-left: 2px;
  flex: none;
  display: flex;
  flex-direction: column;
  background: #fff;
  border-left: 1px solid #c4c4c4;
  border-right: 1px solid #c4c4c4;
}
.phead {
  height: 21px;
  flex: none;
  background: #d8e5f2;
  display: flex;
  align-items: center;
  padding-left: 3px;
  font-size: 12.500px;
  color: #3a3a3a;
  border-bottom: 1px solid #cfcfcf;
}
.phead b { font-weight: 500; }
.pbtns { margin-left: auto; display: flex; gap: 12px; margin-right: 7px; align-items: center; }
.pbtns svg { width: 9px; height: 9px; }
.navcombo { height: 30px; background: #f4f4f4; display: flex; padding: 4px 3px 5px 3px; box-sizing: border-box; flex: none; gap: 1px; }
.combo.dis { flex: 1; color: #999; background: #e6e6e6; }
.combo.dis .cicon { width: 15px; }
.combo.dis .ctext { margin-left: 4px; }
.cicon { width: 18px; height: 15px; flex: none; }
.navpair.big { width: 31px; gap: 1px; }
.tree { background: #fff; }
.tree.top { flex: none; height: 465px; padding-top: 6px; }
.trow { height: 18px; display: flex; align-items: center; white-space: nowrap; }
.trow.flat { padding-left: 1px; }
.chevslot { width: 20px; flex: none; display: flex; padding-left: 3px; box-sizing: border-box; }
.chevslot svg { width: 10px; height: 10px; }
.box { width: 13px; height: 13px; box-sizing: border-box; border: 1px solid #444; flex: none; background: #fff; display: block; }
.box.blue { background: #cde4f7; border-color: #1c6fb0; }
.box svg { width: 11px; height: 11px; display: block; }
.radio { width: 13px; height: 13px; box-sizing: border-box; border: 1px solid #444; border-radius: 50%; flex: none; position: relative; background: #fff; }
.radio.on::after { content: ""; position: absolute; inset: 2px; background: #333; border-radius: 50%; }
.tic { width: 16px; height: 16px; margin-left: 6px; flex: none; }
.tlabel { margin-left: 4px; }
.tfill { display: flex; align-items: center; flex: 1; height: 18px; margin-left: 2px; }
.tfill .tic { margin-left: 4px; }
.tfill.hl { background: #cce4fa; }
.sb { font-size: 9px; color: #444; line-height: 1; }
.sb.low { position: relative; top: 2px; }
.navstrip { height: 6px; background: #f0f0f0; flex: none; }
.tree.bottom { flex: 1; padding-top: 1px; }
.navtabs { height: 26px; display: flex; flex: none; background: #fff; border-top: 1px solid #c8c8c8; border-bottom: 1px solid #c8c8c8; box-sizing: border-box; }
.ntab { width: 37px; height: 24px; background: #ececec; border-right: 1px solid #c8c8c8; display: flex; align-items: center; justify-content: center; }
.ntab svg { width: 18px; height: 16px; }
.ntab.active { background: #fff; height: 25px; width: 38px; }

.work { flex: 1; display: flex; flex-direction: column; min-width: 0; margin-left: 4px; }
.upper { height: 528px; display: flex; flex: none; }
.viewport {
  width: 754px;
  flex: none;
  background: #fff;
  position: relative;
  display: flex;
  flex-direction: column;
  justify-content: space-between;
  padding: 5px 5px 4px;
  box-sizing: border-box;
  line-height: 17px;
}
.model { position: absolute; left: 0; top: 0; width: 753px; height: 528px; }
.vhead, .vfoot { position: relative; }
.vlabel { font-size: 11px; fill: #666; font-family: Roboto, sans-serif; }
.cube { font-size: 14px; font-weight: 700; font-family: "Liberation Sans", sans-serif; }
.cube.y { fill: #3fb84f; }
.cube.x { fill: #e0403a; }

.control {
  flex: 1;
  display: flex;
  flex-direction: column;
  background: #fff;
  min-width: 0;
  border-left: 1px solid #d0d0d0;
}
.control .phead { padding-left: 5px; }
.cpinfo { height: 42px; flex: none; padding: 7px 0 0 10px; line-height: 13px; box-sizing: border-box; }
.cpbody { flex: 1; position: relative; background: linear-gradient(#e2e2e2, #e2e2e2) left / 19px 100% no-repeat, #fff; }
.cpgroup { margin-bottom: 16px; position: relative; }
.cphead { height: 16px; background: #e2e2e2; display: flex; align-items: center; padding-left: 5px; }
.minus { width: 9px; height: 9px; box-sizing: border-box; border: 1px solid #777; background: #fff; position: relative; flex: none; }
.minus::after { content: ""; position: absolute; left: 1px; right: 1px; top: 3px; border-top: 1px solid #333; }
.gtitle { margin-left: 9px; }
.cprow { height: 16px; display: flex; margin-left: 19px; line-height: 16px; background: #f8f8f0; position: relative; }
.cplabel { width: 190px; padding-left: 24px; box-sizing: border-box; flex: none; }
.cplabel::before {
  content: "";
  position: absolute;
  left: 11px;
  top: -8px;
  width: 9px;
  height: 16px;
  border-left: 1px dotted #999;
  border-bottom: 1px dotted #999;
}
.cpval { width: 80px; flex: none; background: #fff; text-align: right; padding-right: 2px; box-sizing: border-box; border-right: 1px solid #eee; }
.cpval.edit { border: 1px solid #a0a0e8; padding-right: 18px; position: relative; line-height: 14px; }
.spin { position: absolute; right: 4px; top: 2px; width: 7px; height: 10px; }
.cpextra { flex: 1; position: relative; }
.flag { position: absolute; left: 7px; top: 4px; border: 4px solid transparent; border-right: 7px solid #e81010; border-left: 0; }
.cptabs { height: 27px; flex: none; display: flex; border-top: 1px solid #c8c8c8; background: #fff; }
.ctab { width: 38px; background: #ececec; border-right: 1px solid #c8c8c8; display: flex; align-items: center; justify-content: center; }
.ctab svg { width: 18px; height: 16px; }
.ctab.active { background: #fff; }

.results { height: 256px; margin-top: 5px; display: flex; flex-direction: column; flex: none; background: #f5f5f5; }
.results .rhead { height: 19px; border: 0; padding-left: 6px; }
.rmenu { height: 21px; display: flex; align-items: center; background: #f5f5f5; padding-left: 8px; gap: 16px; flex: none; }
.rtools { height: 28px; display: flex; align-items: center; padding: 0 0 3px 2px; flex: none; border-top: 1px solid #e4e4e4; box-sizing: border-box; overflow: hidden; }
.rtools .sep { width: 6px; }
.rtools .sep.wide { width: 9px; }
.combo.c1 { width: 142px; }
.combo.c1 .cicon { width: 15px; }
.combo.c1 .ctext { margin-left: 4px; }
.combo.c2 { width: 241px; }
.combo.c2 .ctext { margin-left: 2px; }
.combo.c3 { width: 240px; padding-left: 4px; }
.combo.c3 .sw { margin-right: 4px; }
.combo.c3 .csep { margin-left: 8px; }
.tablewrap { height: 149px; display: flex; flex: none; }
.tableclip { flex: 1; overflow: hidden; min-width: 0; }
.grid { table-layout: fixed; border-collapse: separate; border-spacing: 0; font-size: 11.500px; }
.grid th { font-weight: 400; background: #f0f0f0; border-right: 1px solid #d4d4d4; padding: 0; overflow: hidden; white-space: nowrap; }
.strip th { height: 9px; background: #e2e2e2; border-right: 1px solid #f4f4f4; border-top: 1px solid #d4d4d4; }
.h1 th { height: 15px; line-height: 14px; }
.h1 th:not([rowspan]) { line-height: 12px; vertical-align: top; padding-top: 1px; }
.h2 th { height: 15px; line-height: 14px; border-bottom: 1px solid #c8c8c8; }
.h1 th[rowspan] { border-bottom: 1px solid #c8c8c8; }
.hfirst { background: #e4e4e4 !important; }
.grid td { height: 16px; box-sizing: border-box; padding: 2px 0 0; border-right: 1px solid #e2e2e2; border-bottom: 1px solid #e2e2e2; line-height: 13px; white-space: nowrap; overflow: hidden; position: relative; }
.r1 td { background: #fff9ec; }
.r2 td { background: #fffdf4; }
.r3 td { background: #f8f7ff; }
.r4 td { background: #f2f0fc; }
.grid td.first { background: #e6e6e6; text-align: center; border-right-color: #d4d4d4; }
.grid td.first.nob { border-bottom-color: #e6e6e6; }
.ctr { text-align: center; }
.focus { display: block; height: 15px; margin: -2px 1px 0 0; outline: 1px dotted #111; outline-offset: -1px; line-height: 17px; }
.place { text-align: right; padding-right: 16px !important; }
.pin { position: absolute; right: 4px; top: 5px; width: 9px; height: 7px; }
.lab { padding-left: 5px !important; }
.grid td.num { padding: 0 16px 0 5px; }
.grid td.num.c-u { padding-right: 4px; }
.val { display: block; height: 12px; margin-top: 3px; line-height: 12px; text-align: right; box-sizing: border-box; }
.val.pink { background: #ffb9b9; }
.val.blue { background: #d6e4fb; }
.val.tick { border-left: 1px solid #aaa; }
.val.tickr { border-right: 1px solid #8a8aa0; }
.mark { position: absolute; right: 5px; top: 3px; width: 5px; height: 11px; background: linear-gradient(#808080 0 5px, transparent 5px 6px, #3b3bf0 6px); }
.mark.hi { background: linear-gradient(#a00000 0 5px, transparent 5px 6px, #808080 6px); }
.note { padding-left: 5px !important; }
.note em { font-style: normal; color: #17177f; }
.vscroll { width: 18px; flex: none; background: #f0f0f0; display: flex; flex-direction: column; align-items: center; padding-top: 6px; box-sizing: border-box; }
.vscroll svg { width: 10px; height: 6px; }
.vthumb { width: 14px; height: 18px; background: #cdcdcd; margin-top: 5px; }
.vdown { margin-top: auto; margin-bottom: 6px; }
.hscroll { height: 17px; flex: none; display: flex; align-items: center; background: #f0f0f0; }
.hscroll svg { width: 6px; height: 10px; margin: 0 6px; flex: none; }
.hthumb { width: 935px; height: 15px; background: #cdcdcd; flex: none; margin-right: 90px; }
.sheets { height: 22px; display: flex; flex: 1; align-items: flex-start; }
.pager { width: 119px; height: 21px; display: flex; align-items: center; gap: 9px; padding-left: 5px; box-sizing: border-box; flex: none; }
.pager svg { width: 7px; height: 8px; flex: none; }
.pager span { margin: 0 8px; }
.sheet { padding: 0 8px; height: 21px; line-height: 21px; background: #ececec; border: 1px solid #c8c8c8; border-top: 0; border-left: 0; flex: none; }
.sheet.active { background: #fff; height: 22px; line-height: 21px; border-left: 1px solid #c8c8c8; }

.status { height: 23px; flex: none; display: flex; align-items: flex-end; padding: 0 0 3px 476px; box-sizing: border-box; position: relative; }
.st { height: 17px; line-height: 17px; margin-right: 2px; text-align: center; box-sizing: border-box; flex: none; }
.st.pressed { background: #f6f6f6; border: 1px solid #c8c8c8; border-width: 1px 0 0 1px; }
.w43 { width: 43px; }
.w42 { width: 42px; }
.w47 { width: 47px; }
.w55 { width: 55px; margin-right: 0; }
.scell { height: 17px; line-height: 17px; border-right: 1px solid #dcdcdc; box-sizing: border-box; padding-left: 4px; flex: none; }
.w1 { width: 106px; }
.w2 { width: 106px; }
.w3 { width: 155px; }
.w4 { width: 65px; }
.w5 { width: 78px; }
.w6 { width: 75px; }
.w7 { width: 70px; }
.sgrip { position: absolute; right: 2px; bottom: 2px; width: 8px; height: 8px; }

.annot { position: absolute; left: -1px; top: -1px; width: 1351px; height: 921px; pointer-events: none; }
</style>
